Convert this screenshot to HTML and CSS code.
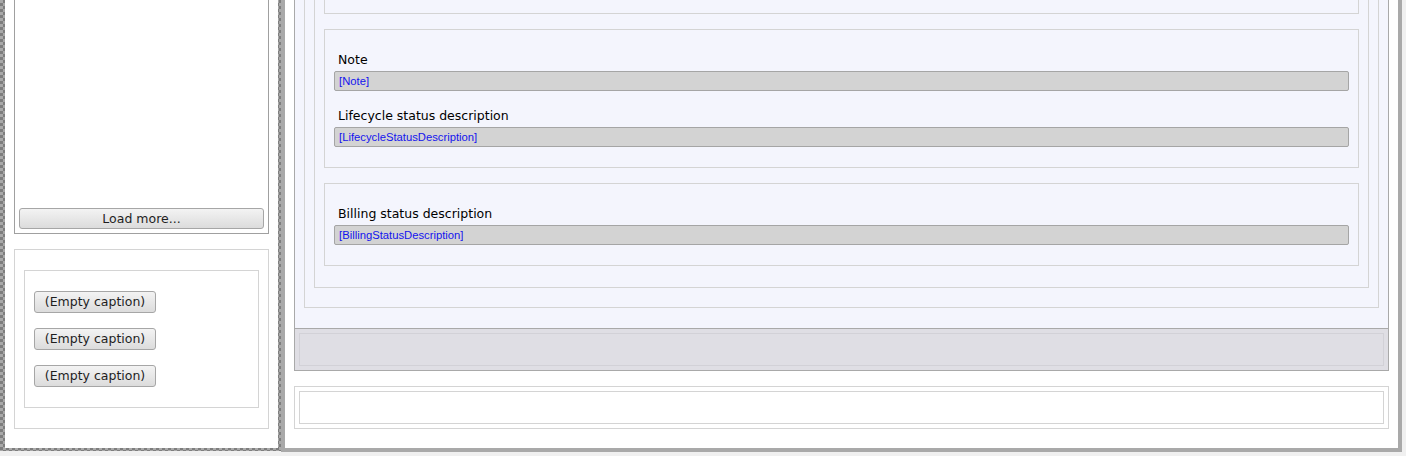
FILE: index.html
```html
<!DOCTYPE html>
<html>
<head>
<meta charset="utf-8">
<link rel="stylesheet" href="styles.css">
</head>
<body>
<div class="frame">
  <div class="left-pane">
    <div class="left-inner">
      <div class="list-box">
        <div class="btn btn-wide">Load more...</div>
      </div>
      <div class="box2">
        <div class="box2-inner">
          <div class="btn btn-cap">(Empty caption)</div>
          <div class="btn btn-cap">(Empty caption)</div>
          <div class="btn btn-cap">(Empty caption)</div>
        </div>
      </div>
    </div>
  </div>
  <div class="right-pane">
    <div class="main-panel">
      <div class="box-outer">
        <div class="box-mid">
          <div class="group group-cut"></div>
          <div class="group">
            <div class="label">Note</div>
            <div class="field">[Note]</div>
            <div class="label label-next">Lifecycle status description</div>
            <div class="field">[LifecycleStatusDescription]</div>
          </div>
          <div class="group">
            <div class="label">Billing status description</div>
            <div class="field">[BillingStatusDescription]</div>
          </div>
        </div>
      </div>
    </div>
    <div class="toolbar"><div class="toolbar-inner"></div></div>
    <div class="bottom-box"><div class="bottom-inner"></div></div>
  </div>
</div>
</body>
</html>
```
FILE: styles.css
```css
html, body {
  margin: 0;
  padding: 0;
}
body {
  background: #f0f0f0;
  width: 1406px;
  height: 456px;
  overflow: hidden;
  font-family: "DejaVu Sans", Verdana, sans-serif;
  font-size: 12.5px;
  color: #000;
}
.frame {
  display: flex;
  align-items: flex-start;
}
.left-pane {
  width: 281px;
  height: 451px;
  box-sizing: border-box;
  padding: 0 3px 3px 5px;
  background-color: #a9a9a9;
  background-image: conic-gradient(#7e7e7e 25%, transparent 0 50%, #7e7e7e 0 75%, transparent 0);
  background-size: 6px 6px;
}
.left-inner {
  height: 100%;
  background: #fff;
  padding: 0 9px;
}
.list-box {
  height: 234px;
  box-sizing: border-box;
  border: 1px solid #a0a0a0;
  border-top: 0;
  padding: 4px;
  display: flex;
  flex-direction: column;
  justify-content: flex-end;
}
.btn {
  box-sizing: border-box;
  border: 1px solid #a6a6a6;
  border-radius: 3px;
  background: linear-gradient(#f3f3f3, #dcdcdc);
  color: #1e1e1e;
  display: flex;
  align-items: center;
  justify-content: center;
  white-space: nowrap;
}
.btn-wide {
  height: 21px;
}
.box2 {
  margin-top: 15px;
  border: 1px solid #d4d4d4;
  padding: 20px 9px;
}
.box2-inner {
  border: 1px solid #d4d4d4;
  padding: 20px 9px;
  display: flex;
  flex-direction: column;
  gap: 15px;
}
.btn-cap {
  width: 122px;
  height: 22px;
  padding-bottom: 1px;
}
.right-pane {
  width: 1121px;
  height: 452px;
  box-sizing: border-box;
  background: #fff;
  border: 4px solid #a9a9a9;
  border-top: 0;
  padding: 0 9px;
}
.main-panel {
  background: #f4f5fd;
  border-left: 1px solid #a9a9a9;
  border-right: 1px solid #a9a9a9;
  padding: 0 9px 20px;
}
.box-outer {
  border: 1px solid #d4d4d4;
  border-top: 0;
  padding: 0 9px 19px;
}
.box-mid {
  border: 1px solid #d4d4d4;
  border-top: 0;
  padding: 0 9px 21px;
}
.group {
  border: 1px solid #d4d4d4;
  padding: 21px 9px 20px;
  margin-top: 15px;
}
.group-cut {
  margin-top: 0;
  border-top: 0;
  padding: 0;
  height: 14px;
  box-sizing: border-box;
}
.label {
  height: 16px;
  line-height: 18px;
  padding-left: 4px;
  margin-bottom: 4px;
  white-space: nowrap;
}
.label-next {
  margin-top: 16px;
}
.field {
  height: 20px;
  box-sizing: border-box;
  border: 1px solid #a5a5a5;
  border-radius: 2px;
  background: #d3d3d3;
  padding-left: 4px;
  font-family: "Liberation Sans", Arial, sans-serif;
  font-size: 11.25px;
  line-height: 18px;
  color: #1414ee;
}
.toolbar {
  border: 1px solid #a9a9a9;
  background: #dfdee4;
  padding: 4px;
}
.toolbar-inner {
  height: 33px;
  box-sizing: border-box;
  border: 1px solid #d2d1d7;
}
.bottom-box {
  margin-top: 15px;
  border: 1px solid #d4d4d4;
  padding: 4px;
}
.bottom-inner {
  height: 33px;
  box-sizing: border-box;
  border: 1px solid #d4d4d4;
}
```
